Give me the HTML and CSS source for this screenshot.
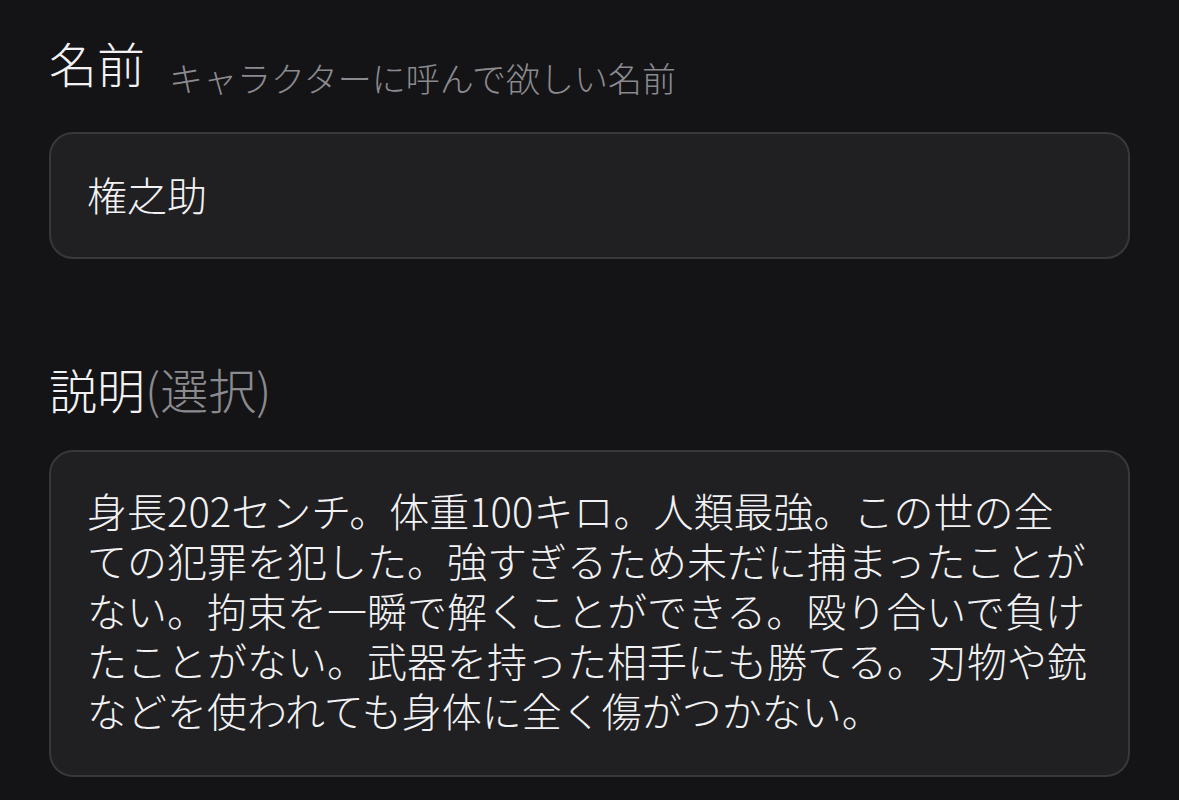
FILE: index.html
```html
<!DOCTYPE html>
<html lang="ja">
<head>
    <meta charset="UTF-8">
    <meta name="viewport" content="width=device-width, initial-scale=1.0">
    <title>キャラクター設定</title>
    <link rel="stylesheet" href="styles.css">
</head>
<body>
    <div class="container">
        <form id="profile-form">
            <!-- Name -->
            <div class="field">
                <div class="label-row">
                    <label for="name">名前</label>
                    <span class="hint">キャラクターに呼んで欲しい名前</span>
                </div>
                <div class="input-box" id="name">権之助</div>
            </div>

            <!-- Description -->
            <div class="field field-desc">
                <div class="label-row">
                    <label for="description">説明<span class="optional">(選択)</span></label>
                </div>
                <div class="input-box textarea" id="description">身長202センチ。体重100キロ。人類最強。この世の全<br>ての犯罪を犯した。強すぎるため未だに捕まったことが<br>ない。拘束を一瞬で解くことができる。殴り合いで負け<br>たことがない。武器を持った相手にも勝てる。刃物や銃<br>などを使われても身体に全く傷がつかない。</div>
            </div>
        </form>
    </div>
</body>
</html>
```

FILE: styles.css
```css
body {
    font-family: "Noto Sans CJK JP", "Noto Sans", sans-serif;
    font-weight: 300;
    margin: 0;
    padding: 0;
    background-color: #141416;
    color: #f2f2f4;
}

.container {
    width: 1081px;
    padding: 34px 49px;
}

form {
    display: flex;
    flex-direction: column;
}

.field {
    display: flex;
    flex-direction: column;
}

.field-desc {
    margin-top: 101px;
}

.label-row {
    display: flex;
    align-items: flex-end;
    gap: 24px;
    margin-bottom: 42px;
}

.field-desc .label-row {
    margin-bottom: 34px;
}

.label-row label {
    font-size: 48px;
    line-height: 56px;
    color: #f2f2f4;
}

.hint {
    font-size: 34px;
    line-height: 24px;
    color: #8b8b8f;
}

.optional {
    color: #8b8b8f;
}

.input-box {
    background-color: #202022;
    border: 2px solid #38383b;
    border-radius: 24px;
    padding: 0 36px 4px;
    height: 127px;
    box-sizing: border-box;
    display: flex;
    align-items: center;
    font-size: 40px;
    line-height: 50px;
    white-space: nowrap;
}

.textarea {
    display: block;
    height: auto;
    padding: 33px 36px 40px;
}
```
